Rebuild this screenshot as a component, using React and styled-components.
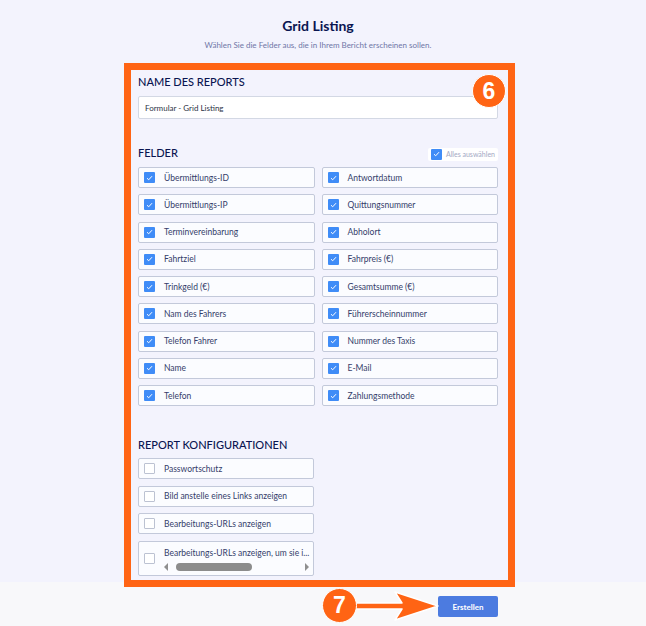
import React from 'react';
import styled, { createGlobalStyle } from 'styled-components';

const GlobalStyle = createGlobalStyle`
  html, body {
    margin: 0;
    padding: 0;
  }
  body {
    background: #f8f8fa;
    font-family: Lato, "Noto Sans", sans-serif;
  }
`;

const Page = styled.div`
  position: relative;
  width: 646px;
  height: 626px;
  overflow: hidden;
`;

const Main = styled.main`
  background: #f3f3fd;
  height: 582px;
  padding-top: 17px;
  box-sizing: border-box;
`;

const Column = styled.div`
  width: 360px;
  margin-left: 138px;
  display: flex;
  flex-direction: column;
`;

const Title = styled.h1`
  margin: 0;
  text-align: center;
  font-size: 14px;
  line-height: 18px;
  font-weight: 700;
  color: #0a1551;
`;

const Subtitle = styled.p`
  margin: 4px 0 0;
  text-align: center;
  font-size: 8px;
  line-height: 12px;
  color: #6f76a7;
`;

const SectionHead = styled.div`
  display: flex;
  align-items: center;
  justify-content: space-between;
  height: 14px;
  margin-top: ${(p) => p.top}px;
`;

const SectionTitle = styled.h2`
  margin: 0;
  font-size: 11px;
  line-height: 14px;
  font-weight: 500;
  color: #0a1551;
  text-transform: uppercase;
`;

const TextInput = styled.div`
  margin-top: 7px;
  height: 23px;
  box-sizing: border-box;
  background: #fff;
  border: 1px solid #d3d8e4;
  border-radius: 2px;
  padding-left: 6px;
  display: flex;
  align-items: center;
  font-size: 8px;
  color: #2c3345;
`;

const SelectAll = styled.div`
  display: flex;
  align-items: center;
  gap: 4px;
  height: 13px;
  padding: 0 3px;
  margin-top: 2px;
  background: #fff;
  border-radius: 2px;
  font-size: 7px;
  color: #a3a9c4;
`;

const FieldGrid = styled.div`
  margin-top: 7px;
  display: grid;
  grid-template-columns: 1fr 1fr;
  grid-auto-rows: 21px;
  column-gap: 7px;
  row-gap: 6.25px;
`;

const ConfigList = styled.div`
  margin-top: 6px;
  width: 176px;
  display: flex;
  flex-direction: column;
  gap: 6.5px;
`;

const Row = styled.div`
  box-sizing: border-box;
  height: ${(p) => p.h || 21}px;
  background: #fbfcff;
  border: 1px solid #c3c9da;
  border-radius: 2px;
  display: flex;
  align-items: center;
  padding-left: 5px;
`;

const Box = styled.span`
  flex: none;
  width: 11px;
  height: 11px;
  box-sizing: border-box;
  border-radius: 1px;
  display: flex;
  align-items: center;
  justify-content: center;
  background: ${(p) => (p.checked ? '#3f8cf7' : '#fff')};
  border: ${(p) => (p.checked ? 'none' : '1px solid #bcc2d2')};
`;

const Label = styled.span`
  margin-left: ${(p) => (p.flush ? 0 : 9)}px;
  font-size: 8.5px;
  color: #343c6a;
  white-space: nowrap;
`;

const ScrollLabel = styled.div`
  margin-left: 9px;
  width: 145px;
  display: flex;
  flex-direction: column;
  gap: 4px;
  padding-top: 3px;
`;

const FakeScrollbar = styled.div`
  display: flex;
  align-items: center;
  height: 9px;
`;

const ScrollArrow = styled.span`
  width: 0;
  height: 0;
  border-top: 4px solid transparent;
  border-bottom: 4px solid transparent;
  ${(p) => (p.dir === 'left' ? 'border-right: 4px solid #8f8f8f;' : 'border-left: 4px solid #8f8f8f;')}
`;

const ScrollThumb = styled.span`
  width: 76px;
  height: 8px;
  border-radius: 4px;
  background: #8c8c8c;
  margin-left: 8px;
  margin-right: auto;
`;

const Footer = styled.footer`
  height: 44px;
  padding-top: 14px;
  box-sizing: border-box;
`;

const FooterRow = styled(Column)`
  flex-direction: row;
  justify-content: flex-end;
`;

const Button = styled.button`
  width: 60px;
  height: 21px;
  border: none;
  border-radius: 2px;
  background: #4c7be0;
  color: #fff;
  font-family: inherit;
  font-size: 8px;
  font-weight: 700;
  padding: 0;
`;

const Frame = styled.div`
  position: absolute;
  left: 124px;
  top: 63px;
  width: 391px;
  height: 524px;
  box-sizing: border-box;
  border: 7px solid #ff6414;
  pointer-events: none;
`;

const Badge = styled.div`
  position: absolute;
  left: ${(p) => p.x}px;
  top: ${(p) => p.y}px;
  width: ${(p) => p.size}px;
  height: ${(p) => p.size}px;
  box-sizing: border-box;
  border-radius: 50%;
  background: #ff6414;
  border: 1.5px solid #fff;
  display: flex;
  align-items: center;
  justify-content: center;
  color: #fff;
  font-family: "Liberation Sans", Arial, sans-serif;
  font-weight: 700;
  font-size: 23px;
`;

const ArrowSvg = styled.svg`
  position: absolute;
  left: 350px;
  top: 588px;
`;

const Check = () => (
  <svg width="7" height="6" viewBox="0 0 7 6">
    <path d="M1 3.2 L2.7 4.8 L6 1.2" fill="none" stroke="#fff" strokeWidth="1" />
  </svg>
);

const Checkbox = ({ checked }) => <Box checked={checked}>{checked ? <Check /> : null}</Box>;

const leftFields = [
  'Übermittlungs-ID',
  'Übermittlungs-IP',
  'Terminvereinbarung',
  'Fahrtziel',
  'Trinkgeld (€)',
  'Nam des Fahrers',
  'Telefon Fahrer',
  'Name',
  'Telefon',
];

const rightFields = [
  'Antwortdatum',
  'Quittungsnummer',
  'Abholort',
  'Fahrpreis (€)',
  'Gesamtsumme (€)',
  'Führerscheinnummer',
  'Nummer des Taxis',
  'E-Mail',
  'Zahlungsmethode',
];

const fields = leftFields.flatMap((f, i) => [f, rightFields[i]]);

const configs = ['Passwortschutz', 'Bild anstelle eines Links anzeigen', 'Bearbeitungs-URLs anzeigen'];

export default function App() {
  return (
    <Page>
      <GlobalStyle />
      <Main>
        <Column>
          <Title>Grid Listing</Title>
          <Subtitle>Wählen Sie die Felder aus, die in Ihrem Bericht erscheinen sollen.</Subtitle>

          <SectionHead top={24}>
            <SectionTitle>Name des Reports</SectionTitle>
          </SectionHead>
          <TextInput>Formular - Grid Listing</TextInput>

          <SectionHead top={27}>
            <SectionTitle>Felder</SectionTitle>
            <SelectAll>
              <Checkbox checked />
              Alles auswählen
            </SelectAll>
          </SectionHead>
          <FieldGrid>
            {fields.map((f) => (
              <Row key={f}>
                <Checkbox checked />
                <Label>{f}</Label>
              </Row>
            ))}
          </FieldGrid>

          <SectionHead top={32}>
            <SectionTitle>Report Konfigurationen</SectionTitle>
          </SectionHead>
          <ConfigList>
            {configs.map((c) => (
              <Row key={c}>
                <Checkbox />
                <Label>{c}</Label>
              </Row>
            ))}
            <Row h={35}>
              <Checkbox />
              <ScrollLabel>
                <Label flush>Bearbeitungs-URLs anzeigen, um sie i...</Label>
                <FakeScrollbar>
                  <ScrollArrow dir="left" />
                  <ScrollThumb />
                  <ScrollArrow dir="right" />
                </FakeScrollbar>
              </ScrollLabel>
            </Row>
          </ConfigList>
        </Column>
      </Main>
      <Footer>
        <FooterRow>
          <Button>Erstellen</Button>
        </FooterRow>
      </Footer>

      <Frame />
      <Badge x={472} y={74} size={34}>6</Badge>
      <ArrowSvg width="92" height="36" viewBox="0 0 92 36">
        <path
          d="M4 15 L52 15 L45 4 L88 18 L45 32 L52 21 L4 21 Z"
          fill="#ff6414"
          stroke="#fff"
          strokeWidth="1.5"
          strokeLinejoin="round"
        />
      </ArrowSvg>
      <Badge x={322} y={588} size={35}>7</Badge>
    </Page>
  );
}
